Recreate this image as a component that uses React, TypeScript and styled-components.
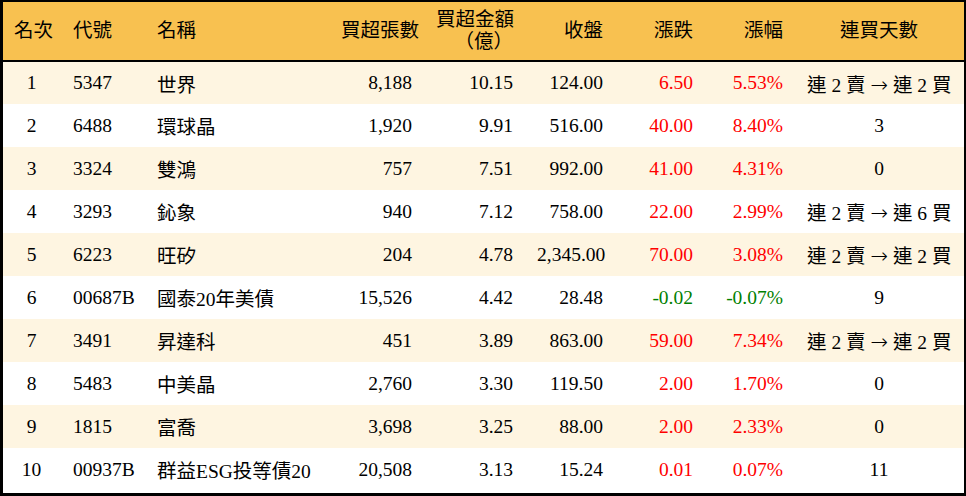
import React from 'react';
import styled, { createGlobalStyle } from 'styled-components';

type Row = {
  rank: number;
  code: string;
  name: string;
  lots: string;
  amount: string;
  close: string;
  change: string;
  pct: string;
  days: string;
};

const rows: Row[] = [
  { rank: 1, code: '5347', name: '世界', lots: '8,188', amount: '10.15', close: '124.00', change: '6.50', pct: '5.53%', days: '連 2 賣 → 連 2 買' },
  { rank: 2, code: '6488', name: '環球晶', lots: '1,920', amount: '9.91', close: '516.00', change: '40.00', pct: '8.40%', days: '3' },
  { rank: 3, code: '3324', name: '雙鴻', lots: '757', amount: '7.51', close: '992.00', change: '41.00', pct: '4.31%', days: '0' },
  { rank: 4, code: '3293', name: '鈊象', lots: '940', amount: '7.12', close: '758.00', change: '22.00', pct: '2.99%', days: '連 2 賣 → 連 6 買' },
  { rank: 5, code: '6223', name: '旺矽', lots: '204', amount: '4.78', close: '2,345.00', change: '70.00', pct: '3.08%', days: '連 2 賣 → 連 2 買' },
  { rank: 6, code: '00687B', name: '國泰20年美債', lots: '15,526', amount: '4.42', close: '28.48', change: '-0.02', pct: '-0.07%', days: '9' },
  { rank: 7, code: '3491', name: '昇達科', lots: '451', amount: '3.89', close: '863.00', change: '59.00', pct: '7.34%', days: '連 2 賣 → 連 2 買' },
  { rank: 8, code: '5483', name: '中美晶', lots: '2,760', amount: '3.30', close: '119.50', change: '2.00', pct: '1.70%', days: '0' },
  { rank: 9, code: '1815', name: '富喬', lots: '3,698', amount: '3.25', close: '88.00', change: '2.00', pct: '2.33%', days: '0' },
  { rank: 10, code: '00937B', name: '群益ESG投等債20', lots: '20,508', amount: '3.13', close: '15.24', change: '0.01', pct: '0.07%', days: '11' },
];

// column widths inside the frame (961px)
const widths = [59, 84, 184, 95, 101, 90, 90, 90, 168];

const GlobalStyle = createGlobalStyle`
  html, body {
    margin: 0;
    padding: 0;
    background: #ffffff;
  }
  body {
    font-family: "Liberation Serif", "Noto Sans CJK TC", serif;
  }
`;

const Frame = styled.div`
  width: 966px;
  height: 496px;
  box-sizing: border-box;
  border-style: solid;
  border-color: #000;
  border-width: 2px 2px 3px 3px;
  overflow: hidden;
`;

const Table = styled.table`
  width: 100%;
  border-collapse: collapse;
  table-layout: fixed;
  font-size: 19.5px;
  color: #000;
`;

const HeadRow = styled.tr`
  height: 59px;
  background: #f8c150;
  border-bottom: 2px solid #000;
`;

const BodyRow = styled.tr<{ $shaded: boolean }>`
  height: 43px;
  background: ${(p) => (p.$shaded ? '#fef5e1' : '#ffffff')};
`;

const Th = styled.th<{ $align: 'left' | 'right' | 'center' }>`
  font-weight: normal;
  text-align: ${(p) => p.$align};
  padding: 0 13px 0 11px;
  line-height: 22px;
  white-space: nowrap;
`;

const Td = styled.td<{ $align: 'left' | 'right' | 'center'; $tone?: 'up' | 'down' }>`
  text-align: ${(p) => p.$align};
  padding: 0 13px 0 11px;
  white-space: nowrap;
  color: ${(p) => (p.$tone === 'up' ? '#ff0000' : p.$tone === 'down' ? '#008000' : '#000')};
`;

const Arrow = styled.span`
  font-family: "DejaVu Sans", sans-serif;
  font-weight: 200;
  font-size: 21px;
  line-height: 1;
`;

function Days({ text }: { text: string }) {
  const parts = text.split('→');
  if (parts.length < 2) return <>{text}</>;
  return (
    <>
      {parts[0]}
      <Arrow>→</Arrow>
      {parts[1]}
    </>
  );
}

export default function App() {
  return (
    <>
      <GlobalStyle />
      <Frame>
        <Table>
          <colgroup>
            {widths.map((w, i) => (
              <col key={i} style={{ width: w }} />
            ))}
          </colgroup>
          <thead>
            <HeadRow>
              <Th $align="center">名次</Th>
              <Th $align="left">代號</Th>
              <Th $align="left">名稱</Th>
              <Th $align="right">買超張數</Th>
              <Th $align="right">
                買超金額
                <br />
                （億）
              </Th>
              <Th $align="right">收盤</Th>
              <Th $align="right">漲跌</Th>
              <Th $align="right">漲幅</Th>
              <Th $align="center">連買天數</Th>
            </HeadRow>
          </thead>
          <tbody>
            {rows.map((r, i) => {
              const tone = r.change.startsWith('-') ? 'down' : 'up';
              return (
                <BodyRow key={r.rank} $shaded={i % 2 === 0}>
                  <Td $align="center">{r.rank}</Td>
                  <Td $align="left">{r.code}</Td>
                  <Td $align="left">{r.name}</Td>
                  <Td $align="right">{r.lots}</Td>
                  <Td $align="right">{r.amount}</Td>
                  <Td $align="right">{r.close}</Td>
                  <Td $align="right" $tone={tone}>{r.change}</Td>
                  <Td $align="right" $tone={tone}>{r.pct}</Td>
                  <Td $align="center">
                    <Days text={r.days} />
                  </Td>
                </BodyRow>
              );
            })}
          </tbody>
        </Table>
      </Frame>
    </>
  );
}
